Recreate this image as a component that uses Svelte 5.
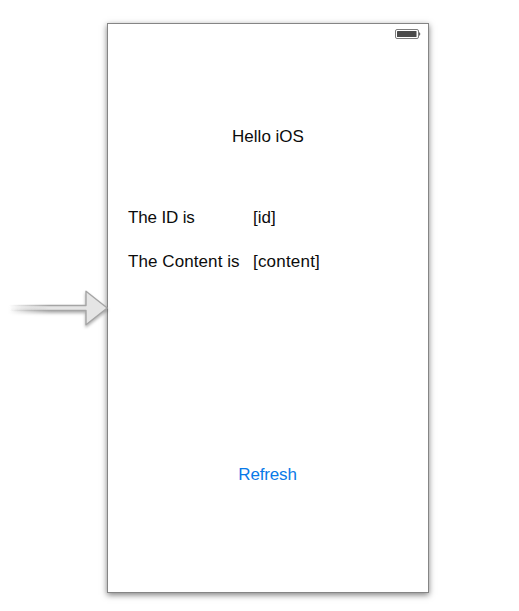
<script>
  const rows = [
    { name: 'id', label: 'The ID is', value: '[id]' },
    { name: 'content', label: 'The Content is', value: '[content]' }
  ];
</script>

<main class="canvas">
  <svg class="entry" width="110" height="50" viewBox="0 0 110 50" aria-hidden="true">
    <defs>
      <linearGradient id="fill" gradientUnits="userSpaceOnUse" x1="9" y1="0" x2="50" y2="0">
        <stop offset="0" stop-color="#e5e5e5" stop-opacity="0" />
        <stop offset="1" stop-color="#e5e5e5" />
      </linearGradient>
      <linearGradient id="edge" gradientUnits="userSpaceOnUse" x1="9" y1="0" x2="50" y2="0">
        <stop offset="0" stop-color="#a5a5a5" stop-opacity="0" />
        <stop offset="1" stop-color="#a5a5a5" />
      </linearGradient>
    </defs>
    <path d="M9 20.5H86V6.2L107.2 23L86 39.8V25.5H9" fill="url(#fill)" stroke="url(#edge)" stroke-width="1.4" stroke-linejoin="round" />
  </svg>
  <section class="screen">
    <header class="status">
      <svg width="26" height="11" viewBox="0 0 26 11" aria-label="Battery">
        <rect x="0.5" y="0.5" width="23" height="9" rx="1.5" fill="#fff" stroke="#7c7c7c" />
        <rect x="2" y="2" width="19.5" height="6" rx="0.5" fill="#4b4b4b" />
        <path d="M24 3.2Q25.3 3.5 25.3 5T24 6.8Z" fill="#666" />
      </svg>
    </header>
    <h1>Hello iOS</h1>
    <div class="details">
      {#each rows as row}
        <div class="row" class:wide={row.name === 'content'}><span class="label">{row.label}</span><span class="value">{row.value}</span></div>
      {/each}
    </div>
    <button>Refresh</button>
  </section>
</main>

<style>
  :global(body) { background: #fff; }
  .canvas {
    display: flex;
    align-items: flex-start;
    box-sizing: border-box;
    width: 519px;
    height: 611px;
    padding-top: 23px;
    overflow: hidden;
    font-family: "Liberation Sans", Arial, sans-serif;
    font-size: 17px;
    line-height: 20px;
    color: #0c0c0c;
  }
  .entry {
    position: relative;
    z-index: 1;
    flex: none;
    margin: 262px -3px 0 0;
    filter: drop-shadow(0 2px 1.5px rgba(0, 0, 0, 0.3));
  }
  .screen {
    box-sizing: border-box;
    display: flex;
    flex-direction: column;
    flex: none;
    width: 322px;
    height: 570px;
    border: 1px solid #858585;
    background: #fff;
    box-shadow: 0 2px 6px rgba(0, 0, 0, 0.5);
  }
  .status {
    display: flex;
    justify-content: flex-end;
    height: 20px;
    padding: 5px 7px 0 0;
    box-sizing: border-box;
  }
  h1 {
    margin: 83px 0 0;
    font-size: 17px;
    font-weight: 400;
    line-height: 20px;
    text-align: center;
  }
  .details {
    display: flex;
    flex-direction: column;
    gap: 24px;
    margin-top: 61px;
    padding-left: 20px;
  }
  .row { display: flex; }
  .label { width: 125px; letter-spacing: -0.15px; }
  .wide .label { letter-spacing: 0.08px; }
  .wide .value { letter-spacing: 0.2px; }
  button {
    align-self: center;
    margin: 193px 0 0;
    padding: 0 1px 0 0;
    border: 0;
    background: none;
    color: #0879e8;
    font: inherit;
    letter-spacing: -0.15px;
  }
</style>
